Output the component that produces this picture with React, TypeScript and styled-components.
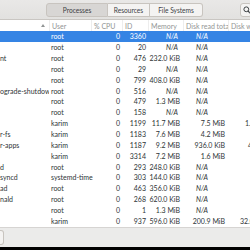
import styled, { createGlobalStyle } from 'styled-components';

const GlobalStyle = createGlobalStyle`
  html, body {
    margin: 0;
    padding: 0;
    background: #000;
  }
  body {
    font-family: Lato, "Noto Sans", sans-serif;
    font-size: 7px;
    color: #2e3436;
  }
`;

const Window = styled.div`
  width: 250px;
  height: 247px;
  overflow: hidden;
  display: flex;
  flex-direction: column;
  background: #ffffff;
`;

const HeaderBar = styled.div`
  flex: 0 0 20px;
  box-sizing: border-box;
  display: flex;
  align-items: center;
  padding-left: 46px;
  background: linear-gradient(to bottom, #e9e8e7, #e2e1df);
  border-bottom: 1px solid #c9c6c2;
`;

const Tabs = styled.div`
  display: flex;
  height: 14px;
`;

const Tab = styled.div<{ $active?: boolean; $width: number }>`
  width: ${(p) => p.$width}px;
  box-sizing: border-box;
  display: flex;
  align-items: center;
  justify-content: center;
  border: 1px solid #c8c4bf;
  border-left-width: 0;
  background: ${(p) => (p.$active ? '#d8d6d4' : '#f4f3f2')};
  color: #3c4043;
  font-size: 6.6px;

  &:first-child {
    border-left-width: 1px;
    border-radius: 3px 0 0 3px;
  }
  &:last-child {
    border-radius: 0 3px 3px 0;
  }
`;

const SearchButton = styled.div`
  margin-left: 37px;
  width: 16px;
  height: 14px;
  box-sizing: border-box;
  border: 1px solid #c8c4bf;
  border-radius: 3px;
  background: #f4f3f2;
  display: flex;
  align-items: center;
  padding-left: 2px;
`;

const List = styled.div`
  flex: 1;
  display: flex;
  flex-direction: column;
  background: #ffffff;
`;

const columns = '49px 42px 31px 26px 35px 45px 40px';

const HeadRow = styled.div`
  display: grid;
  grid-template-columns: ${columns};
  height: 11px;
  color: #929595;
`;

const HeadCell = styled.div<{ $first?: boolean }>`
  display: flex;
  align-items: center;
  justify-content: ${(p) => (p.$first ? 'flex-end' : 'flex-start')};
  padding: ${(p) => (p.$first ? '0 4px 0 0' : '0 0 0 2px')};
  white-space: nowrap;
  overflow: hidden;
  border-left: ${(p) => (p.$first ? 'none' : '1px solid #ededed')};
`;

const Row = styled.div<{ $selected?: boolean }>`
  display: grid;
  grid-template-columns: ${columns};
  height: 10.85px;
  align-items: center;
  background: ${(p) => (p.$selected ? '#3584e4' : 'transparent')};
  color: ${(p) => (p.$selected ? '#ffffff' : '#2e3436')};
`;

const NameCell = styled.div`
  min-width: 0;
  white-space: nowrap;
  overflow: hidden;
`;

const UserCell = styled.div`
  padding-left: 2px;
  white-space: nowrap;
`;

const NumCell = styled.div<{ $pad: number }>`
  text-align: right;
  padding-right: ${(p) => p.$pad}px;
  white-space: nowrap;
`;

const WriteCell = styled.div<{ $start: number }>`
  padding-left: ${(p) => p.$start}px;
  white-space: nowrap;
  overflow: hidden;
`;

const NA = styled.span<{ $shift: number }>`
  font-style: italic;
  display: inline-block;
  margin-right: ${(p) => p.$shift}px;
`;

const BottomBar = styled.div`
  flex: 0 0 20px;
  box-sizing: border-box;
  display: flex;
  align-items: center;
  background: #ebebea;
  border-top: 1px solid #d6d4d2;
`;

const ActionButton = styled.div`
  width: 4px;
  height: 15px;
  box-sizing: border-box;
  border: 1px solid #c8c4bf;
  border-left: none;
  border-radius: 0 3px 3px 0;
  background: #f4f3f2;
`;

type Proc = {
  name: string;
  user: string;
  id: number;
  mem: string;
  read: string;
  write: string;
  writeAt?: number;
};

const rows: Proc[] = [
  { name: '', user: 'root', id: 3360, mem: 'N/A', read: 'N/A', write: '' },
  { name: '', user: 'root', id: 20, mem: 'N/A', read: 'N/A', write: '' },
  { name: 'nt', user: 'root', id: 476, mem: '232.0 KiB', read: 'N/A', write: '' },
  { name: '', user: 'root', id: 29, mem: 'N/A', read: 'N/A', write: '' },
  { name: '', user: 'root', id: 799, mem: '408.0 KiB', read: 'N/A', write: '' },
  { name: 'ograde-shutdown', user: 'root', id: 516, mem: 'N/A', read: 'N/A', write: '' },
  { name: '', user: 'root', id: 479, mem: '1.3 MiB', read: 'N/A', write: '' },
  { name: '', user: 'root', id: 158, mem: 'N/A', read: 'N/A', write: '' },
  { name: '', user: 'karim', id: 1199, mem: '11.7 MiB', read: '7.5 MiB', write: '1.5 MiB', writeAt: 17 },
  { name: 'r-fs', user: 'karim', id: 1183, mem: '7.6 MiB', read: '4.2 MiB', write: '' },
  { name: 'r-apps', user: 'karim', id: 1187, mem: '9.2 MiB', read: '936.0 KiB', write: '4.0 KiB', writeAt: 20 },
  { name: '', user: 'karim', id: 3314, mem: '7.2 MiB', read: '1.6 MiB', write: '' },
  { name: 'd', user: 'root', id: 293, mem: '248.0 KiB', read: 'N/A', write: '' },
  { name: 'syncd', user: 'systemd-time', id: 303, mem: '144.0 KiB', read: 'N/A', write: '' },
  { name: 'ad', user: 'root', id: 463, mem: '356.0 KiB', read: 'N/A', write: '' },
  { name: 'nald', user: 'root', id: 268, mem: '620.0 KiB', read: 'N/A', write: '' },
  { name: '', user: 'root', id: 1, mem: '1.3 MiB', read: 'N/A', write: '' },
  { name: '', user: 'karim', id: 937, mem: '596.0 KiB', read: '200.9 MiB', write: '32.0 KiB', writeAt: 12 },
];

function Value({ v, shift }: { v: string; shift: number }) {
  return v === 'N/A' ? <NA $shift={shift}>N/A</NA> : <>{v}</>;
}

export default function App() {
  return (
    <>
      <GlobalStyle />
      <Window>
        <HeaderBar>
          <Tabs>
            <Tab $active $width={62}>Processes</Tab>
            <Tab $width={42}>Resources</Tab>
            <Tab $width={53}>File Systems</Tab>
          </Tabs>
          <SearchButton>
            <svg width="8" height="8" viewBox="0 0 8 8">
              <circle cx="3.3" cy="3.3" r="2.4" fill="none" stroke="#3c4043" strokeWidth="1" />
              <path d="M5 5 L7.4 7.4" stroke="#3c4043" strokeWidth="1.1" />
            </svg>
          </SearchButton>
        </HeaderBar>
        <List>
          <HeadRow>
            <HeadCell $first>
              <svg width="4" height="3" viewBox="0 0 4 3">
                <path d="M0 3 L2 0 L4 3 Z" fill="#929595" />
              </svg>
            </HeadCell>
            <HeadCell>User</HeadCell>
            <HeadCell>% CPU</HeadCell>
            <HeadCell>ID</HeadCell>
            <HeadCell>Memory</HeadCell>
            <HeadCell>Disk read tota</HeadCell>
            <HeadCell>Disk wr</HeadCell>
          </HeadRow>
          {rows.map((r, i) => (
            <Row key={r.id} $selected={i === 0}>
              <NameCell>{r.name}</NameCell>
              <UserCell>{r.user}</UserCell>
              <NumCell $pad={2}>0</NumCell>
              <NumCell $pad={2}>{r.id}</NumCell>
              <NumCell $pad={3}>
                <Value v={r.mem} shift={2} />
              </NumCell>
              <NumCell $pad={3}>
                <Value v={r.read} shift={17} />
              </NumCell>
              <WriteCell $start={r.writeAt ?? 0}>{r.write}</WriteCell>
            </Row>
          ))}
        </List>
        <BottomBar>
          <ActionButton />
        </BottomBar>
      </Window>
    </>
  );
}
